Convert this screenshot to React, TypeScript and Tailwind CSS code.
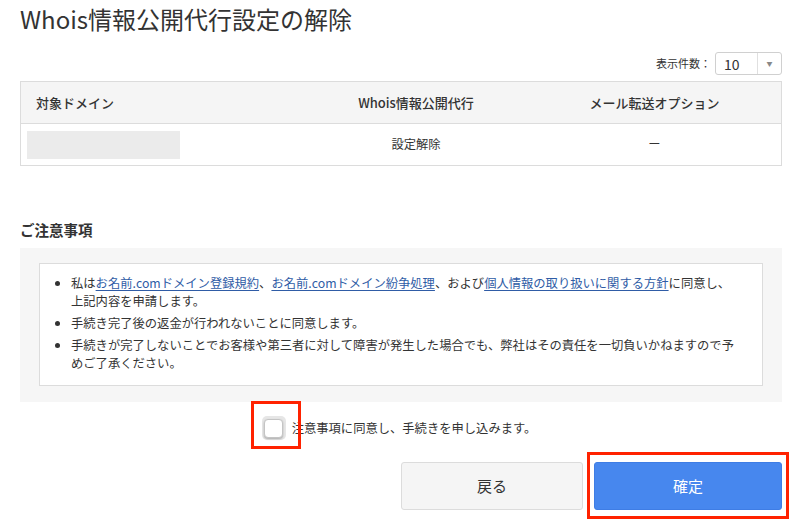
import React from 'react'

const links = 'text-[#2f5ca6] underline underline-offset-2'

export default function App() {
    return (
        <div className="w-[800px] h-[526px] bg-white pl-[20px] pr-[18px] text-[#333] font-['Noto_Sans_CJK_JP',sans-serif] overflow-hidden">
            <h1 className="pt-[3px] text-[24px] leading-[32px] font-normal">Whois情報公開代行設定の解除</h1>

            {/* per-page selector */}
            <div className="mt-[17px] flex items-center justify-end gap-[4px]">
                <span className="text-[11px] leading-[23px]">表示件数：</span>
                <div className="w-[67px] h-[23px] border border-[#d0d0d0] rounded-[3px] flex items-center bg-white">
                    <span className="flex-1 pl-[8px] text-[14px] leading-none">10</span>
                    <span className="w-[24px] h-full border-l border-[#e0e0e0] flex items-center justify-center text-[6px] text-[#888]">▼</span>
                </div>
            </div>

            {/* domain table */}
            <div className="mt-[6px] border border-[#dcdcdc]">
                <div className="grid grid-cols-[283px_224px_1fr] h-[42px] items-center bg-[#f5f5f5] border-b border-[#dcdcdc] text-[13px] font-medium">
                    <div className="pl-[15px]">対象ドメイン</div>
                    <div className="text-center">Whois情報公開代行</div>
                    <div className="text-center">メール転送オプション</div>
                </div>
                <div className="grid grid-cols-[283px_224px_1fr] h-[41px] items-center text-[12.3px]">
                    <div className="pl-[6px]">
                        <div className="w-[153px] h-[28px] bg-[#ebebeb]"></div>
                    </div>
                    <div className="text-center">設定解除</div>
                    <div className="text-center">ー</div>
                </div>
            </div>

            <h2 className="mt-[54px] text-[14.5px] leading-[20px] font-bold">ご注意事項</h2>

            {/* notes */}
            <div className="mt-[8px] bg-[#f6f6f6] pt-[15px] pb-[16px] px-[19px]">
                <div className="bg-white border border-[#dcdcdc] pt-[10px] pb-[13px] pl-[31px] pr-[20px]">
                    <ul className="list-disc text-[12.3px] leading-[18px] space-y-[4px] marker:text-[#333]">
                        <li>
                            私は<span className={links}>お名前.comドメイン登録規約</span>、<span className={links}>お名前.comドメイン紛争処理</span>、および<span className={links}>個人情報の取り扱いに関する方針</span>に同意し、<br />上記内容を申請します。
                        </li>
                        <li>手続き完了後の返金が行われないことに同意します。</li>
                        <li>手続きが完了しないことでお客様や第三者に対して障害が発生した場合でも、弊社はその責任を一切負いかねますので予めご了承ください。</li>
                    </ul>
                </div>
            </div>

            {/* agree checkbox */}
            <div className="mt-[2px] h-[48px] flex items-center justify-center gap-[6px] pr-[4px]">
                <span className="relative w-[24px] h-[24px] rounded-[5px] bg-[#e6e6e6] flex items-center justify-center">
                    <span className="w-[19px] h-[19px] rounded-[4px] bg-white border border-[#c4c4c4] shadow-[0_1px_2px_rgba(0,0,0,0.25)]"></span>
                    <span className="absolute -left-[11px] -right-[15px] -top-[15px] -bottom-[9px] border-[3px] border-[#ff2200]"></span>
                </span>
                <span className="text-[12.3px]">注意事項に同意し、手続きを申し込みます。</span>
            </div>

            {/* actions */}
            <div className="mt-[10px] flex justify-end gap-[11px]">
                <button className="w-[182px] h-[48px] bg-[#f5f5f5] border border-[#dcdcdc] rounded-[3px] text-[15px] text-[#333]">戻る</button>
                <div className="relative">
                    <button className="w-[188px] h-[48px] bg-[#4787ee] border border-[#3f7de4] rounded-[3px] text-[15px] text-white">確定</button>
                    <span className="absolute -left-[7px] -right-[7px] -top-[10px] -bottom-[9px] border-[3px] border-[#ff2200]"></span>
                </div>
            </div>
        </div>
    )
}
